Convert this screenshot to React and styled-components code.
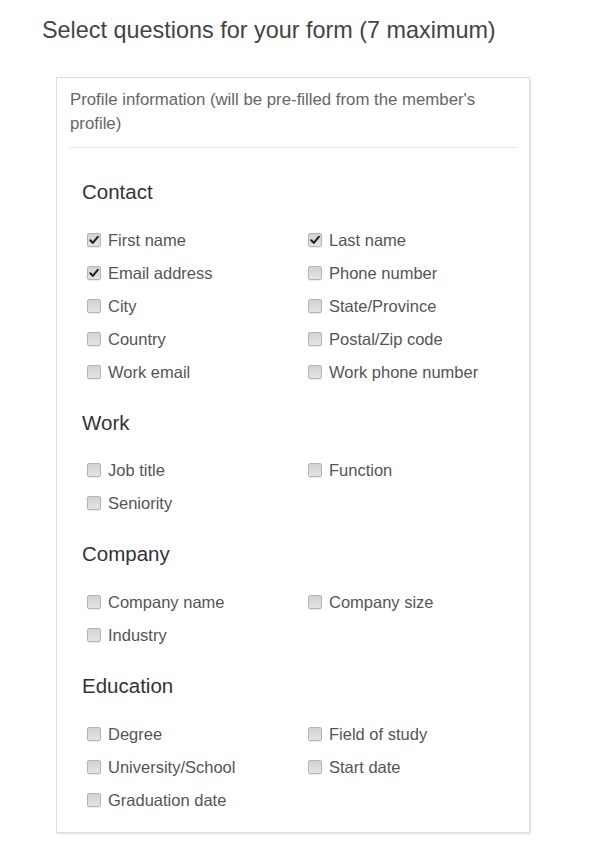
import React from "react";
import styled, { createGlobalStyle } from "styled-components";

const Global = createGlobalStyle`
  html, body { margin: 0; padding: 0; background: #fff; }
  body { font-family: "Liberation Sans", Arial, sans-serif; }
  * { box-sizing: border-box; }
`;

const Page = styled.div`
  padding: 16px 0 16px 42px;
  width: 589px;
`;

const Title = styled.h1`
  margin: 0 0 33px 0;
  font-size: 23.4px;
  line-height: 28px;
  font-weight: normal;
  color: #444;
`;

const Card = styled.div`
  margin-left: 14px;
  width: 474px;
  border: 1px solid #dcdcdc;
  box-shadow: 1px 1px 2px rgba(0, 0, 0, 0.12);
  padding: 10px 13px 16px 13px;
  background: #fff;
`;

const CardHeader = styled.div`
  font-size: 16.8px;
  line-height: 24px;
  color: #666;
  padding-bottom: 11px;
  border-bottom: 1px solid #e8e8e8;
`;

const Section = styled.section`
  padding-left: 12px;
  margin-top: ${(p) => (p.$first ? "32px" : "22.5px")};
`;

const Heading = styled.h2`
  margin: 0 0 19.2px 0;
  font-size: 20.5px;
  line-height: 24px;
  font-weight: normal;
  color: #333;
`;

const Grid = styled.div`
  display: grid;
  grid-template-columns: 221px 1fr;
  grid-auto-rows: 33px;
  padding-left: 5px;
`;

const Item = styled.label`
  display: flex;
  align-items: center;
  gap: 7px;
  font-size: 16.5px;
  color: #555;
  line-height: 20px;
`;

const Box = styled.span`
  width: 14px;
  height: 14px;
  border: 1px solid #b5b5b5;
  border-radius: 2px;
  background: linear-gradient(#d2d2d2, #e4e4e4);
  box-shadow: 0 1px 1px rgba(0, 0, 0, 0.08);
  display: inline-flex;
  align-items: center;
  justify-content: center;
  flex-shrink: 0;
`;

const Check = () => (
  <svg width="10" height="10" viewBox="0 0 10 10">
    <path d="M1.3 5.2 L3.8 7.9 L8.8 1.8" fill="none" stroke="#1e1e1e" strokeWidth="2" strokeLinecap="round" strokeLinejoin="round" />
  </svg>
);

const sections = [
  {
    title: "Contact",
    items: [
      ["First name", true],
      ["Last name", true],
      ["Email address", true],
      ["Phone number", false],
      ["City", false],
      ["State/Province", false],
      ["Country", false],
      ["Postal/Zip code", false],
      ["Work email", false],
      ["Work phone number", false],
    ],
  },
  {
    title: "Work",
    items: [
      ["Job title", false],
      ["Function", false],
      ["Seniority", false],
    ],
  },
  {
    title: "Company",
    items: [
      ["Company name", false],
      ["Company size", false],
      ["Industry", false],
    ],
  },
  {
    title: "Education",
    items: [
      ["Degree", false],
      ["Field of study", false],
      ["University/School", false],
      ["Start date", false],
      ["Graduation date", false],
    ],
  },
];

export default function App() {
  return (
    <>
      <Global />
      <Page>
        <Title>Select questions for your form (7 maximum)</Title>
        <Card>
          <CardHeader>Profile information (will be pre-filled from the member's profile)</CardHeader>
          {sections.map((s, i) => (
            <Section key={s.title} $first={i === 0}>
              <Heading>{s.title}</Heading>
              <Grid>
                {s.items.map(([label, checked]) => (
                  <Item key={label}>
                    <Box>{checked && <Check />}</Box>
                    {label}
                  </Item>
                ))}
              </Grid>
            </Section>
          ))}
        </Card>
      </Page>
    </>
  );
}
